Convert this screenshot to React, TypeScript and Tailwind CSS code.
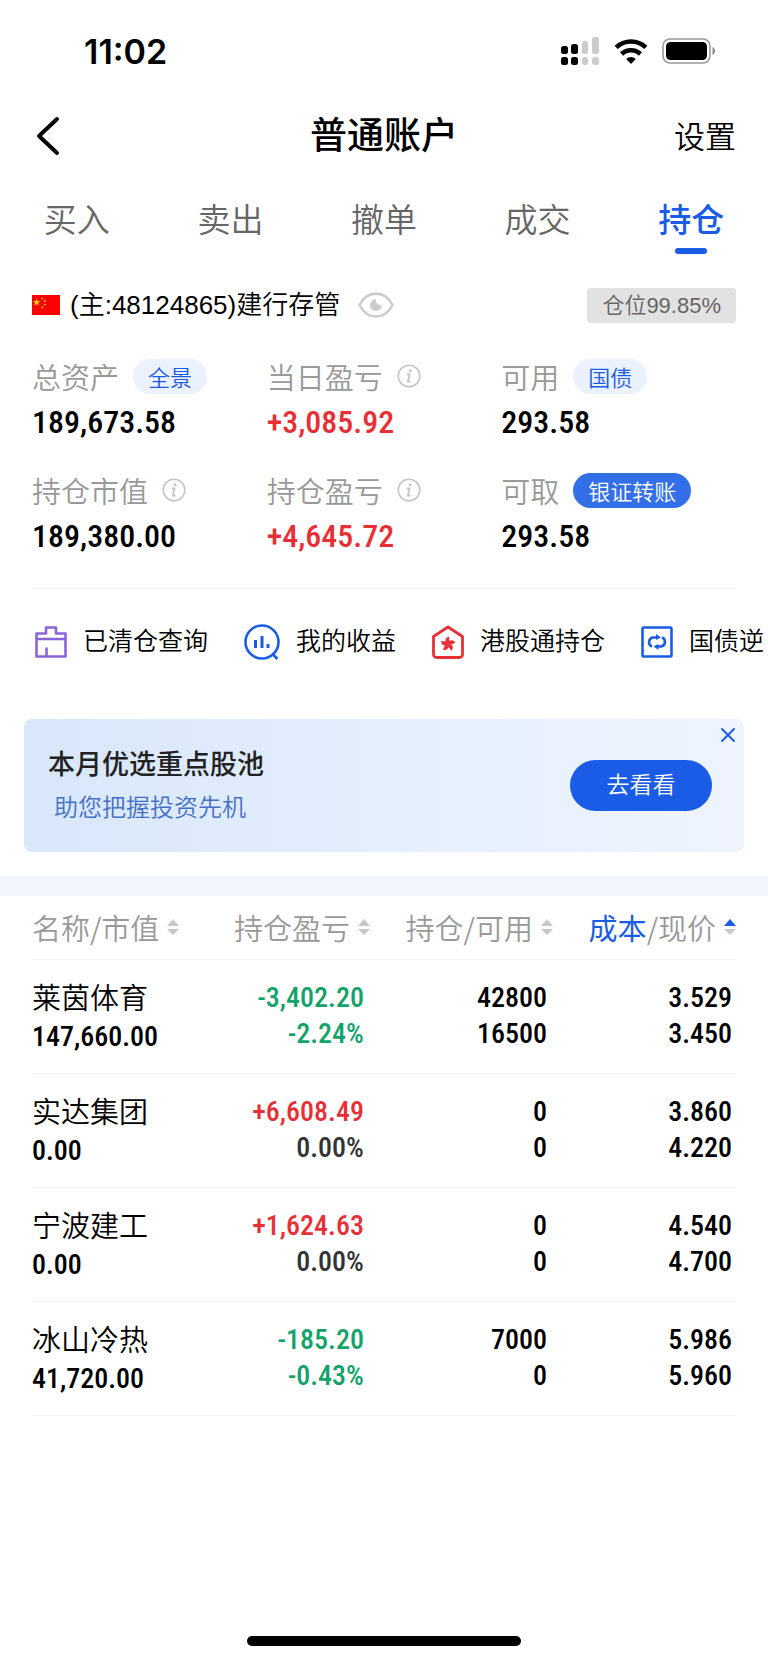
import React from 'react';
import { X } from 'lucide-react';

const tabs = ['买入', '卖出', '撤单', '成交', '持仓'];

const stats = [
  { label: '总资产', value: '189,673.58', pill: '全景' },
  { label: '当日盈亏', value: '+3,085.92', info: true },
  { label: '可用', value: '293.58', pill: '国债' },
  { label: '持仓市值', value: '189,380.00', info: true },
  { label: '持仓盈亏', value: '+4,645.72', info: true },
  { label: '可取', value: '293.58', pill: '银证转账', solid: true },
];

const holdings = [
  { name: '莱茵体育', market: '147,660.00', profit: '-3,402.20', rate: '-2.24%', held: '42800', usable: '16500', cost: '3.529', price: '3.450' },
  { name: '实达集团', market: '0.00', profit: '+6,608.49', rate: '0.00%', held: '0', usable: '0', cost: '3.860', price: '4.220' },
  { name: '宁波建工', market: '0.00', profit: '+1,624.63', rate: '0.00%', held: '0', usable: '0', cost: '4.540', price: '4.700' },
  { name: '冰山冷热', market: '41,720.00', profit: '-185.20', rate: '-0.43%', held: '7000', usable: '0', cost: '5.986', price: '5.960' },
];

function toneOf(value: string) {
  if (value.startsWith('+')) return 'text-[#e63036]';
  if (value.startsWith('-')) return 'text-[#12a36a]';
  return 'text-[#333333]';
}

function SignalIcon() {
  return (
    <svg width="40" height="28" viewBox="0 0 40 28">
      <rect x="1" y="9" width="7" height="8" rx="2.5" />
      <rect x="11" y="7" width="7" height="10" rx="2.5" />
      <rect x="22" y="4" width="6" height="13" rx="2.5" fill="#cccccc" />
      <rect x="32" y="0" width="7" height="17" rx="2.5" fill="#cccccc" />
      <rect x="1" y="20" width="7" height="8" rx="2.5" />
      <rect x="11" y="20" width="7" height="8" rx="2.5" />
      <rect x="22" y="20" width="6" height="8" rx="2.5" fill="#cccccc" />
      <rect x="32" y="20" width="7" height="8" rx="2.5" fill="#cccccc" />
    </svg>
  );
}

function WifiIcon() {
  return (
    <svg width="34" height="25" viewBox="0 0 34 25" fill="none" stroke="#000" strokeWidth="4.6">
      <path d="M2.2 8.4a21.5 21.5 0 0 1 29.6 0" />
      <path d="M7.6 15a13.6 13.6 0 0 1 18.8 0" />
      <path d="M17 25l-4.8-5a7 7 0 0 1 9.6 0z" fill="#000" stroke="none" />
    </svg>
  );
}

function BatteryIcon() {
  return (
    <svg width="54" height="26" viewBox="0 0 54 26">
      <rect x="1" y="1" width="47" height="24" rx="7" fill="none" stroke="#999999" strokeWidth="1.6" />
      <rect x="4" y="4" width="41" height="18" rx="4.5" />
      <path d="M50.5 9v8c3.4-1.4 3.4-6.6 0-8z" fill="#8c8c8c" />
    </svg>
  );
}

function ChinaFlag() {
  return (
    <svg width="28" height="20" viewBox="0 0 28 20">
      <rect width="28" height="20" fill="#ff0000" />
      <path d="M4.6 3.6l.9 2.7h2.8L6 8l.9 2.7-2.3-1.6-2.3 1.6L3.2 8 .9 6.3h2.8z" fill="#ffe100" />
      <g fill="#ffd000">
        <circle cx="10.3" cy="3.6" r="0.9" />
        <circle cx="12.8" cy="6" r="0.9" />
        <circle cx="12.8" cy="9.6" r="0.9" />
        <circle cx="10.3" cy="12.4" r="0.9" />
      </g>
    </svg>
  );
}

function EyeIcon() {
  return (
    <svg width="36" height="26" viewBox="0 0 36 26">
      <path d="M1.5 13C9-2.2 27-2.2 34.5 13 27 28.2 9 28.2 1.5 13z" fill="none" stroke="#cccccc" strokeWidth="2.6" />
      <path d="M18 7a6 6 0 1 0 6 6 5 5 0 0 1-6-6z" fill="#cccccc" />
    </svg>
  );
}

function InfoIcon() {
  return (
    <svg width="24" height="24" viewBox="0 0 24 24" fill="none" stroke="#c6c6c6">
      <circle cx="12" cy="12" r="10.8" strokeWidth="1.6" />
      <circle cx="13.2" cy="6.8" r="1.5" fill="#c6c6c6" stroke="none" />
      <path d="M9.8 10.5h2.8l-1.7 7h2.6" strokeWidth="1.8" />
    </svg>
  );
}

function ClearedIcon() {
  return (
    <svg width="32" height="32" viewBox="0 0 32 32" fill="none" stroke="#8b63da" strokeWidth="2.6" strokeLinejoin="round">
      <path d="M1.5 30.5V7.5H11V1.5h10v6h9.5v23z" />
      <path d="M1.5 13h29M11.5 30v-8.5" />
    </svg>
  );
}

function ProfitIcon() {
  return (
    <svg width="36" height="36" viewBox="0 0 36 36" fill="none" stroke="#1a5ce6" strokeWidth="2.6">
      <circle cx="18" cy="18" r="16.5" />
      <path d="M28 29.5l5.5 5.5" />
      <path d="M11.5 16v8M18 12v12M24 20v4" strokeWidth="3" />
    </svg>
  );
}

function ConnectIcon() {
  return (
    <svg width="32" height="34" viewBox="0 0 32 34">
      <path
        d="M1.5 11.5L16 2l14.5 9.5v18a3 3 0 0 1-3 3h-23a3 3 0 0 1-3-3z"
        fill="none"
        stroke="#e63036"
        strokeWidth="2.8"
        strokeLinejoin="round"
      />
      <g fill="#e63036">
        {[0, 72, 144, 216, 288].map((angle) => (
          <path key={angle} d="M16 19c-4-2-3.2-6.4 1.2-7.6-1 2 2 4.200-1.200 7.600z" transform={`rotate(${angle} 16 19)`} />
        ))}
      </g>
    </svg>
  );
}

function RepoIcon() {
  return (
    <svg width="32" height="32" viewBox="0 0 32 32" fill="none" stroke="#1a5ce6" strokeWidth="2.6">
      <rect x="1.5" y="1.5" width="29" height="29" rx="1" />
      <path d="M11 20.5a4.7 4.7 0 0 1 1-9h5" />
      <path d="M21 11.5a4.7 4.7 0 0 1-1 9h-5" />
      <path d="M15 8l5 3.5-5 2.5zM17.500 18v6l-5-3.500z" fill="#1a5ce6" stroke="none" />
    </svg>
  );
}

const shortcuts = [
  { label: '已清仓查询', icon: <ClearedIcon /> },
  { label: '我的收益', icon: <ProfitIcon /> },
  { label: '港股通持仓', icon: <ConnectIcon /> },
  { label: '国债逆', icon: <RepoIcon /> },
];

function SortIcon({ active = false }: { active?: boolean }) {
  return (
    <svg width="12" height="16" viewBox="0 0 12 16" className="shrink-0">
      <path d="M6 0l6 7H0z" fill={active ? '#1a5ce6' : '#c8c8c8'} />
      <path d="M6 16l6-6H0z" fill="#c8c8c8" />
    </svg>
  );
}

const digits = "font-['Roboto_Condensed',Roboto,sans-serif] font-medium";

export default function App() {
  return (
    <div className="flex min-h-screen flex-col overflow-hidden bg-white font-['Liberation_Sans','Noto_Sans_CJK_SC',sans-serif] font-[350] text-black">
      <div className="flex h-[102px] items-center justify-between pl-[84px] pr-[52px]">
        <span className="font-['Inter',sans-serif] text-[34px] font-semibold">11:02</span>
        <div className="flex items-center gap-[14px]">
          <SignalIcon />
          <WifiIcon />
          <BatteryIcon />
        </div>
      </div>

      <header className="grid h-[68px] grid-cols-3 items-center px-8">
        <button aria-label="返回" className="justify-self-start pl-1">
          <svg width="24" height="40" viewBox="0 0 24 40" fill="none" stroke="#000" strokeWidth="4" strokeLinecap="round" strokeLinejoin="round">
            <path d="M21 3L3 20l18 17" />
          </svg>
        </button>
        <h1 className="pt-[2px] text-center text-[37px] font-medium leading-[48px]">普通账户</h1>
        <button className="justify-self-end pt-1 text-[31px] leading-[40px]">设置</button>
      </header>

      <nav className="grid h-[100px] grid-cols-5">
        {tabs.map((tab) => {
          const active = tab === '持仓';
          return (
            <button
              key={tab}
              className={`flex flex-col items-center pt-[26px] text-[33px] leading-[50px] ${active ? 'font-medium text-[#1a5ce6]' : 'text-[#666666]'}`}
            >
              {tab}
              {active && <span className="mt-[2px] h-[6px] w-8 rounded-full bg-[#1a5ce6]" />}
            </button>
          );
        })}
      </nav>

      <section className="px-8">
        <div className="flex h-[70px] items-center">
          <ChinaFlag />
          <span className="ml-[10px] text-[26px]">(主:48124865)建行存管</span>
          <button aria-label="隐藏金额" className="ml-[18px]">
            <EyeIcon />
          </button>
          <span className="ml-auto flex h-[35px] items-center rounded-[4px] bg-[#e2e2e2] px-[15px] text-[22px] text-[#666666]">
            仓位99.85%
          </span>
        </div>

        <div className="grid grid-cols-3 border-b border-[#f5f5f5] pb-[5px] pt-[15px]">
          {stats.map((item) => (
            <div key={item.label} className="h-[114px]">
              <div className="flex h-[42px] items-center font-['Noto_Sans_CJK_SC',sans-serif] text-[29px] leading-[42px] text-[#999999]">
                {item.label}
                {item.info && (
                  <button aria-label={`${item.label}说明`} className="ml-[14px]">
                    <InfoIcon />
                  </button>
                )}
                {item.pill && (
                  <button
                    className={`ml-[14px] flex h-[35px] items-center rounded-full px-[15px] text-[22px] ${item.solid ? 'bg-[#326fe8] text-white' : 'bg-[#ebf1fd] text-[#1a5ce6]'}`}
                  >
                    {item.pill}
                  </button>
                )}
              </div>
              <div className={`${digits} text-[32px] leading-[50px] ${item.value.startsWith('+') ? 'text-[#e63036]' : 'text-black'}`}>
                {item.value}
              </div>
            </div>
          ))}
        </div>
      </section>

      <div className="flex h-[106px] items-center gap-9 overflow-hidden whitespace-nowrap pl-[35px]">
        {shortcuts.map((item) => (
          <button key={item.label} className="flex shrink-0 items-center gap-4 text-[25px]">
            {item.icon}
            {item.label}
          </button>
        ))}
      </div>

      <section className="relative mx-6 mt-6 flex h-[133px] items-center justify-between rounded-lg bg-linear-to-r from-[#d9e7fb] via-[#e4effd] to-[#eff4ff] pl-6 pr-8">
        <div>
          <h2 className="text-[27px] font-medium leading-[44px] text-[#222222]">本月优选重点股池</h2>
          <p className="pl-[6px] text-[24px] leading-[42px] text-[#4470c8]">助您把握投资先机</p>
        </div>
        <button className="h-[51px] w-[142px] rounded-full bg-[#1a5ce6] text-[23px] text-white">去看看</button>
        <button aria-label="关闭" className="absolute right-1 top-1 text-[#1a5ce6]">
          <X size={24} strokeWidth={2} />
        </button>
      </section>

      <div className="mt-6 h-5 bg-[#f2f5fe]" />

      <div className="px-8">
        <table className="w-full table-fixed border-collapse text-right">
          <thead className="font-['Noto_Sans_CJK_SC',sans-serif]">
            <tr className="h-[63px] border-b border-[#f5f5f5] text-[29px] leading-[42px] text-[#999999]">
              <th className="w-[22%] font-[350]">
                <button className="flex items-center gap-2 whitespace-nowrap">名称/市值<SortIcon /></button>
              </th>
              <th className="w-[26%] font-[350]">
                <button className="ml-auto flex items-center gap-2 whitespace-nowrap">持仓盈亏<SortIcon /></button>
              </th>
              <th className="w-[26%] font-[350]">
                <button className="ml-auto flex items-center gap-2 whitespace-nowrap">持仓/可用<SortIcon /></button>
              </th>
              <th className="w-[26%] font-[350]">
                <button className="ml-auto flex items-center gap-2 whitespace-nowrap">
                  <span><span className="font-normal text-[#1a5ce6]">成本</span>/现价</span>
                  <SortIcon active />
                </button>
              </th>
            </tr>
          </thead>
          <tbody>
            {holdings.map((row) => (
              <tr key={row.name} className="h-[114px] border-b border-[#f5f5f5] text-[28px] leading-[36px]">
                <td className="whitespace-nowrap pt-[2px] text-left">
                  <div className="text-[29px] leading-[40px]">{row.name}</div>
                  <div className={digits}>{row.market}</div>
                </td>
                <td className={`${digits} pr-[6px]`}>
                  <div className={toneOf(row.profit)}>{row.profit}</div>
                  <div className={toneOf(row.rate)}>{row.rate}</div>
                </td>
                <td className={`${digits} pr-[6px]`}>
                  <div>{row.held}</div>
                  <div>{row.usable}</div>
                </td>
                <td className={`${digits} pr-1`}>
                  <div>{row.cost}</div>
                  <div>{row.price}</div>
                </td>
              </tr>
            ))}
          </tbody>
        </table>
      </div>

      <div className="mx-auto mb-[17px] mt-auto h-[10px] w-[274px] rounded-full bg-black" />
    </div>
  );
}
